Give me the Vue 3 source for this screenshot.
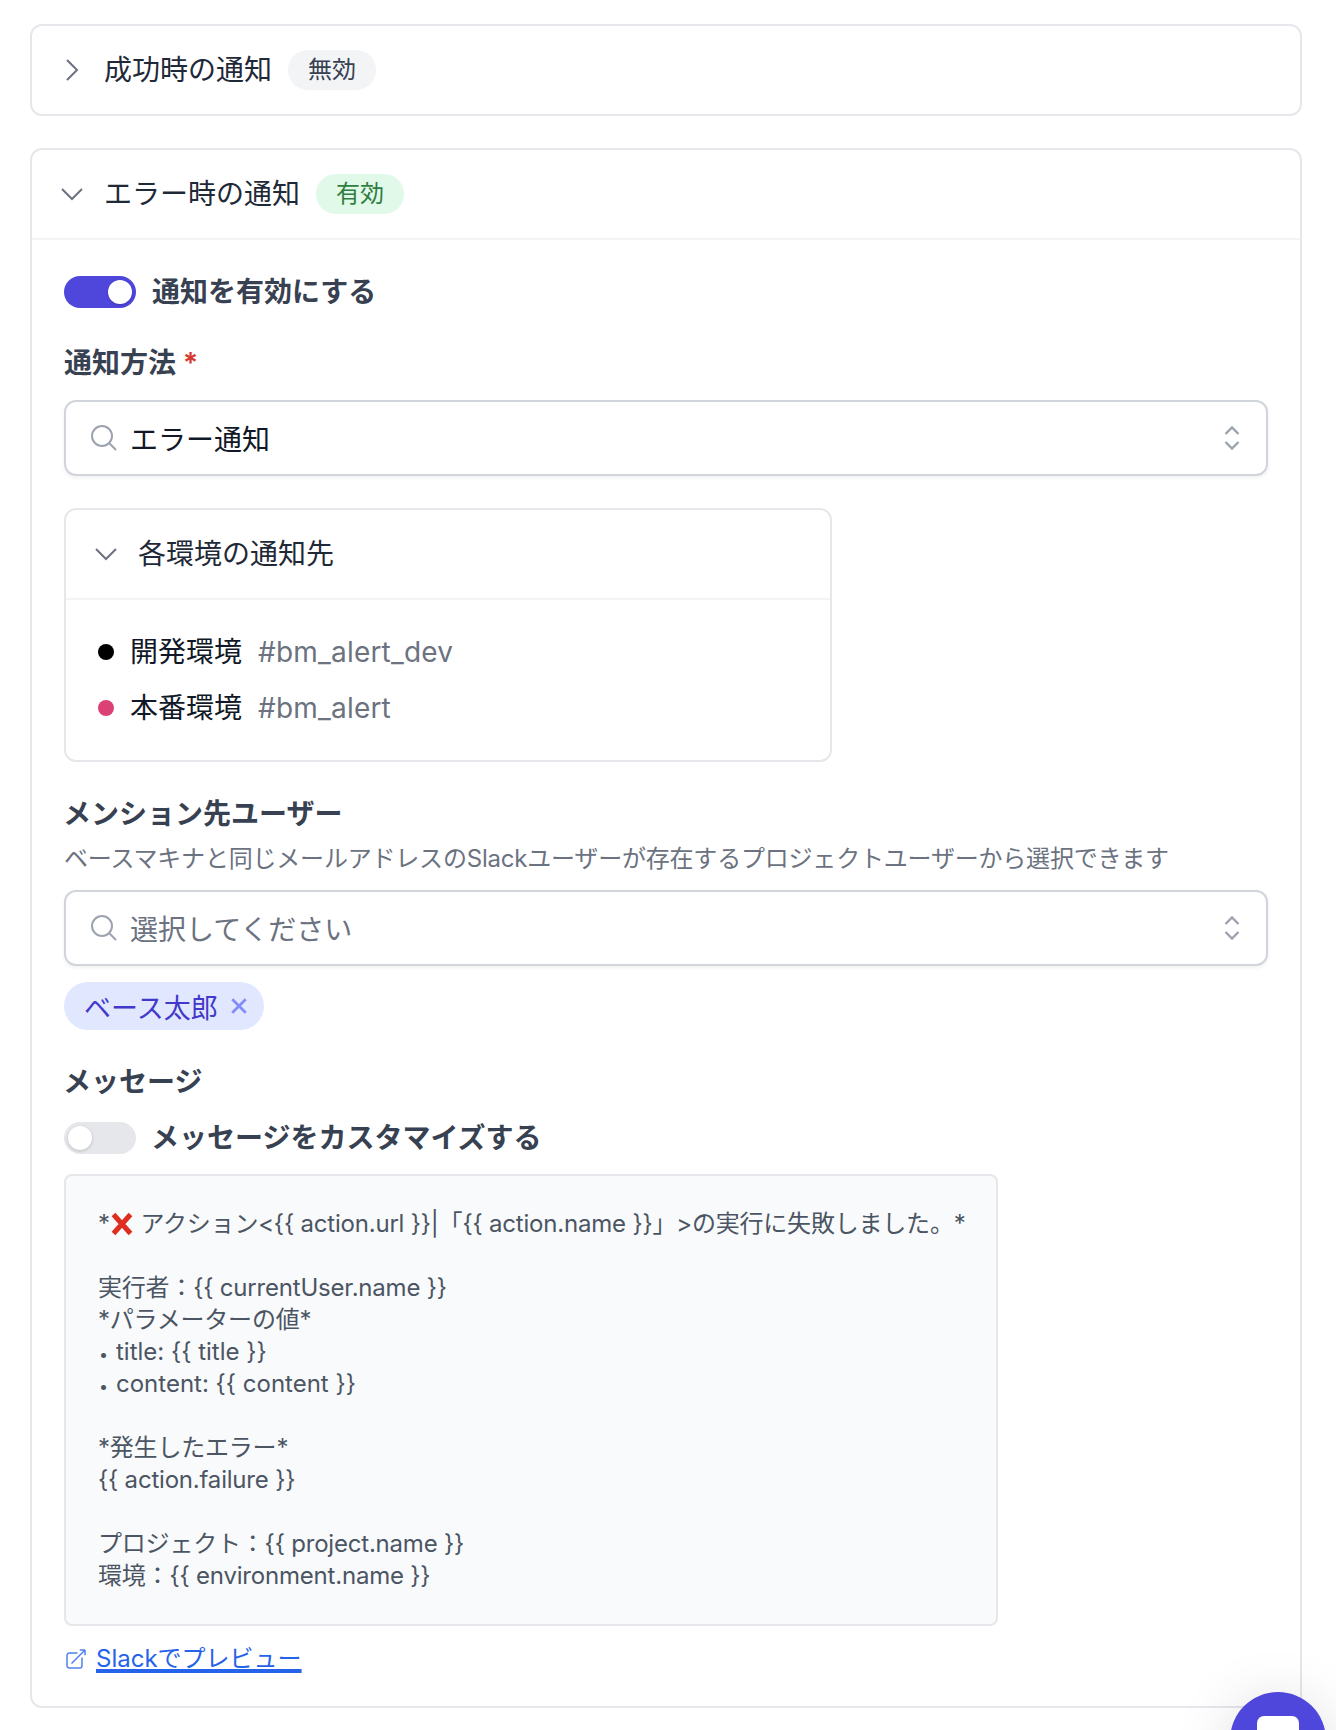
<template>
  <div class="page">
    <section class="card">
      <header class="card-head">
        <svg class="chev" viewBox="0 0 24 24"><path d="M8.25 4.5l7.5 7.5-7.5 7.5" /></svg>
        <span class="card-title">成功時の通知</span>
        <span class="badge badge-off">無効</span>
      </header>
    </section>

    <section class="card card-open">
      <header class="card-head card-head-open">
        <svg class="chev" viewBox="0 0 24 24"><path d="M19.5 8.25l-7.5 7.5-7.5-7.5" /></svg>
        <span class="card-title">エラー時の通知</span>
        <span class="badge badge-on">有効</span>
      </header>

      <div class="card-body">
        <div class="toggle-row">
          <span class="toggle toggle-on"><span class="knob"></span></span>
          <span class="label">通知を有効にする</span>
        </div>

        <div class="label method-label">通知方法 <span class="req">*</span></div>
        <div class="select select-method">
          <svg class="search" viewBox="0 0 24 24"><path d="M21 21l-5.197-5.197m0 0A7.5 7.5 0 105.196 5.196a7.5 7.5 0 0010.607 10.607z" /></svg>
          <span class="select-value">エラー通知</span>
          <svg class="updown" viewBox="0 0 16 24"><path d="M1.5 8L8 1.5 14.5 8M1.5 16L8 22.5 14.5 16" /></svg>
        </div>

        <div class="env-card">
          <div class="env-head">
            <svg class="chev" viewBox="0 0 24 24"><path d="M19.5 8.25l-7.5 7.5-7.5-7.5" /></svg>
            <span class="card-title">各環境の通知先</span>
          </div>
          <ul class="env-list">
            <li v-for="env in environments" :key="env.name" class="env-row">
              <span class="dot" :style="{ background: env.color }"></span>
              <span class="env-name">{{ env.name }}</span>
              <span class="env-channel">{{ env.channel }}</span>
            </li>
          </ul>
        </div>

        <div class="label mention-label">メンション先ユーザー</div>
        <p class="hint">ベースマキナと同じメールアドレスのSlackユーザーが存在するプロジェクトユーザーから選択できます</p>
        <div class="select select-mention">
          <svg class="search" viewBox="0 0 24 24"><path d="M21 21l-5.197-5.197m0 0A7.5 7.5 0 105.196 5.196a7.5 7.5 0 0010.607 10.607z" /></svg>
          <span class="select-placeholder">選択してください</span>
          <svg class="updown" viewBox="0 0 16 24"><path d="M1.5 8L8 1.5 14.5 8M1.5 16L8 22.5 14.5 16" /></svg>
        </div>

        <span class="chip">
          ベース太郎
          <svg class="chip-x" viewBox="0 0 16 16"><path d="M2 2l12 12M14 2L2 14" /></svg>
        </span>

        <div class="label message-label">メッセージ</div>
        <div class="toggle-row toggle-row-message">
          <span class="toggle"><span class="knob"></span></span>
          <span class="label">メッセージをカスタマイズする</span>
        </div>

        <div class="message-box">
          <div class="message-first">*<svg class="cross" viewBox="0 0 24 24"><path d="M3.5 2.5l17 19M20.5 2.5l-17 19" /></svg> アクション&lt;{{ '{{' }} action.url }}|「{{ '{{' }} action.name }}」&gt;の実行に失敗しました。*</div>
          <div v-for="(line, i) in messageLines" :key="i" class="message-line" :class="{ 'message-bullet': line.bullet }">
            <span v-if="line.bullet" class="bullet">•</span>{{ line.text }}
          </div>
        </div>

        <a class="preview-link" href="#">
          <svg class="ext" viewBox="0 0 24 24"><path d="M13.5 6H5.25A2.25 2.25 0 003 8.25v10.5A2.25 2.25 0 005.25 21h10.5A2.25 2.25 0 0018 18.75V10.5m-10.5 6L21 3m0 0h-5.25M21 3v5.25" /></svg>
          <span class="preview-text">Slackでプレビュー</span>
        </a>
      </div>
    </section>

    <button class="chat-fab" type="button" aria-label="チャット"><span class="chat-icon"></span></button>
  </div>
</template>

<script setup>
const environments = [
  { name: '開発環境', channel: '#bm_alert_dev', color: '#000000' },
  { name: '本番環境', channel: '#bm_alert', color: '#db4175' }
]

const messageLines = [
  { text: '' },
  { text: '実行者：{{ currentUser.name }}' },
  { text: '*パラメーターの値*' },
  { text: 'title: {{ title }}', bullet: true },
  { text: 'content: {{ content }}', bullet: true },
  { text: '' },
  { text: '*発生したエラー*' },
  { text: '{{ action.failure }}' },
  { text: '' },
  { text: 'プロジェクト：{{ project.name }}' },
  { text: '環境：{{ environment.name }}' }
]
</script>

<style scoped>
.page {
  height: 1730px;
  padding: 24px 34px 0 30px;
  box-sizing: border-box;
  overflow: hidden;
  background: #fff;
  font-family: Inter, "Noto Sans CJK JP", sans-serif;
}

.card {
  border: 2px solid #e5e7eb;
  border-radius: 12px;
  background: #fff;
}
.card-open {
  margin-top: 32px;
}

.card-head {
  display: flex;
  align-items: center;
  height: 88px;
  padding: 0 24px;
}
.card-head-open {
  height: 90px;
  box-sizing: border-box;
  border-bottom: 2px solid #f3f4f6;
}

.chev {
  width: 32px;
  height: 32px;
  flex: none;
  margin-right: 16px;
  fill: none;
  stroke: #6b7280;
  stroke-width: 1.5;
}

.card-title {
  font-size: 28px;
  line-height: 40px;
  color: #1f2937;
}

.badge {
  margin-left: 16px;
  padding: 0 20px;
  height: 40px;
  line-height: 40px;
  border-radius: 20px;
  font-size: 24px;
}
.badge-off { background: #f3f4f6; color: #374151; }
.badge-on { background: #e0f9e8; color: #2f7d3f; }

.card-body {
  padding: 32px 32px 31px;
}

.toggle-row {
  display: flex;
  align-items: center;
  gap: 16px;
}
.toggle-row-message {
  gap: 15px;
  margin-top: 16px;
}

.toggle {
  display: flex;
  width: 72px;
  height: 32px;
  padding: 4px;
  box-sizing: border-box;
  border-radius: 16px;
  background: #e5e7eb;
}
.toggle-on {
  justify-content: flex-end;
  background: #4f46dc;
}
.knob {
  width: 24px;
  height: 24px;
  border-radius: 50%;
  background: #fff;
  box-shadow: 0 1px 3px rgba(0, 0, 0, 0.2);
}

.label {
  font-size: 28px;
  line-height: 40px;
  font-weight: 600;
  color: #374151;
}
.method-label { margin-top: 31px; }
.mention-label { margin-top: 32px; margin-left: -1px; }
.message-label { margin-top: 32px; margin-left: -1px; }
.req { color: #d63a2f; }

.select {
  display: flex;
  align-items: center;
  height: 76px;
  padding: 0 26px 0 22px;
  border: 2px solid #d1d5db;
  border-radius: 12px;
  background: #fff;
  box-shadow: 0 2px 4px rgba(0, 0, 0, 0.06);
  box-sizing: border-box;
  font-size: 28px;
}
.select-method { margin-top: 17px; }
.select-mention { margin-top: 15px; }
.select-value { color: #111827; }
.select-placeholder { color: #6b7280; }

.search {
  width: 32px;
  height: 32px;
  flex: none;
  margin-right: 10px;
  fill: none;
  stroke: #9ca3af;
  stroke-width: 1.5;
}
.updown {
  width: 16px;
  height: 24px;
  flex: none;
  margin-left: auto;
  fill: none;
  stroke: #9ca3af;
  stroke-width: 2.4;
}

.env-card {
  width: 768px;
  margin-top: 32px;
  border: 2px solid #e5e7eb;
  border-radius: 12px;
  box-sizing: border-box;
}
.env-head {
  display: flex;
  align-items: center;
  height: 90px;
  padding: 0 24px;
  box-sizing: border-box;
  border-bottom: 2px solid #f3f4f6;
}
.env-list {
  display: flex;
  flex-direction: column;
  gap: 16px;
  margin: 0;
  padding: 32px;
  list-style: none;
}
.env-row {
  display: flex;
  align-items: center;
  font-size: 28px;
  line-height: 40px;
}
.dot {
  width: 16px;
  height: 16px;
  border-radius: 50%;
  margin-right: 16px;
}
.env-name { color: #111827; }
.env-channel { margin-left: 16px; color: #6b7280; letter-spacing: 0.2px; }

.hint {
  margin: 9px 0 0;
  font-size: 24px;
  line-height: 32px;
  color: #6b7280;
  letter-spacing: -0.2px;
}

.chip {
  display: inline-flex;
  align-items: center;
  height: 48px;
  margin-top: 16px;
  padding: 0 16px 0 20px;
  border-radius: 24px;
  background: #e0e7ff;
  color: #4338ca;
  font-size: 27px;
  vertical-align: top;
}
.chip-x {
  width: 18px;
  height: 18px;
  margin-left: 12px;
  fill: none;
  stroke: #818cf8;
  stroke-width: 2.4;
}

.message-box {
  width: 934px;
  margin-top: 16px;
  padding: 32px;
  box-sizing: border-box;
  border: 2px solid #e5e7eb;
  border-radius: 8px;
  background: #f9fafb;
  color: #4b5563;
  font-size: 24px;
  line-height: 32px;
  letter-spacing: -0.2px;
}
.message-first {
  height: 32px;
  white-space: nowrap;
}
.message-line {
  height: 32px;
}
.message-bullet {
  letter-spacing: 0;
}
.bullet {
  display: inline-block;
  width: 18px;
  padding-left: 1px;
  box-sizing: border-box;
  font-size: 16px;
  line-height: 16px;
}
.cross {
  width: 24px;
  height: 24px;
  vertical-align: -4px;
  fill: none;
  stroke: #dd2e1f;
  stroke-width: 5;
}

.preview-link {
  display: flex;
  align-items: center;
  gap: 8px;
  width: max-content;
  margin-top: 17px;
  color: #2563eb;
  font-size: 24px;
  line-height: 32px;
}
.preview-text {
  text-decoration: underline;
  text-underline-offset: 4px;
}
.ext {
  width: 24px;
  height: 24px;
  fill: none;
  stroke: #2563eb;
  stroke-width: 1.5;
  opacity: 0.8;
}

.chat-fab {
  position: fixed;
  right: 10px;
  top: 1692px;
  display: flex;
  justify-content: center;
  align-items: flex-start;
  width: 96px;
  height: 96px;
  padding: 24px 0 0;
  border: none;
  border-radius: 50%;
  background: #4f46dc;
  box-shadow: 0 10px 60px rgba(0, 0, 0, 0.15);
}
.chat-icon {
  display: block;
  width: 42px;
  height: 40px;
  border-radius: 7px;
  background: #fff;
}
</style>

<style>
html, body {
  margin: 0;
  overflow: hidden;
}
</style>
